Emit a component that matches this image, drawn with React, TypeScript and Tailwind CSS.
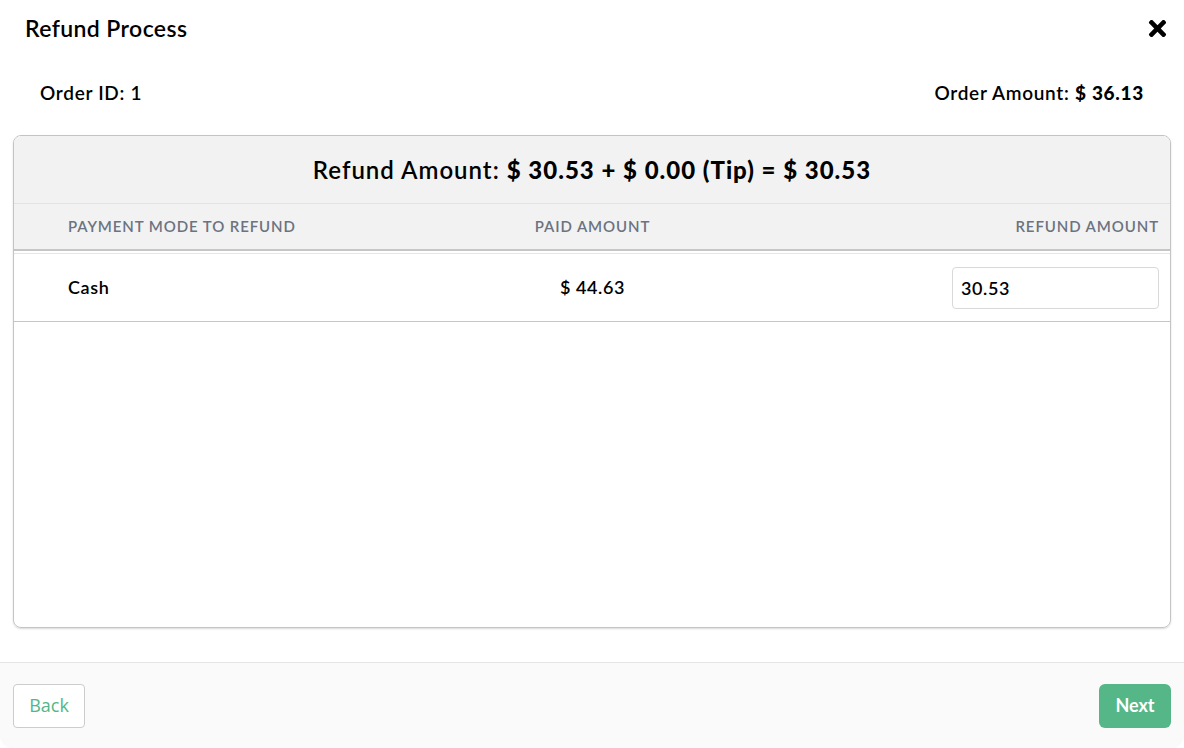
import { FaTimes } from "react-icons/fa";

export default function App() {
  return (
    <div
      className="w-[1184px] h-[748px] bg-white flex flex-col text-black"
      style={{ fontFamily: "Lato, 'Noto Sans', sans-serif" }}
    >
      <div className="flex items-center justify-between pl-[25px] pr-[14px] h-[56px]">
        <h1 className="text-[23px] font-semibold tracking-[0.4px]">Refund Process</h1>
        <button className="text-[25px] text-black">
          <FaTimes />
        </button>
      </div>

      <div className="flex justify-between px-[40px] h-[74px] items-center text-[19px] font-semibold tracking-[0.7px]">
        <span>Order ID: 1</span>
        <span>
          Order Amount: <span className="font-black">$ 36.13</span>
        </span>
      </div>

      <div className="mx-[13px] mt-[5px] h-[493px] border border-[#c4c4c4] rounded-lg shadow-[0_1px_2px_rgba(0,0,0,0.15)] overflow-hidden flex flex-col">
        <div className="bg-[#f2f2f2]">
          <div className="h-[68px] flex items-center justify-center text-[24px] font-semibold tracking-[1px] border-b border-[#e2e2e2]">
            Refund Amount:&nbsp;
            <span className="font-black">$ 30.53 + $ 0.00 (Tip) = $ 30.53</span>
          </div>
          <div className="grid grid-cols-3 h-[47px] items-center pl-[54px] pr-[11px] text-[15px] font-semibold tracking-[0.9px] text-[#6b7280] uppercase border-b-2 border-[#c6c6c6]">
            <span>Payment Mode to Refund</span>
            <span className="text-center pr-[42px]">Paid Amount</span>
            <span className="text-right">Refund Amount</span>
          </div>
        </div>
        <div className="mt-[2px] grid grid-cols-3 h-[69px] items-center pl-[54px] pr-[11px] text-[18px] font-semibold tracking-[0.6px] border-t border-[#e5e5e5] border-b border-b-[#c6c6c6]">
          <span>Cash</span>
          <span className="text-center pr-[42px]">$ 44.63</span>
          <div className="flex justify-end">
            <input
              defaultValue="30.53"
              className="w-[207px] h-[42px] border border-[#d9d9d9] rounded-[4px] px-[8px] text-[18px] font-semibold tracking-[0.6px] outline-none"
            />
          </div>
        </div>
      </div>

      <div className="mt-[34px] flex-1 bg-[#fafafa] border-t border-[#e5e5e5] rounded-b-[12px] flex items-center justify-between px-[13px]">
        <button
          className="w-[72px] h-[44px] bg-white border border-[#cccccc] rounded-[4px] text-[18px] text-[#52b788]"
          style={{ fontFamily: "'Open Sans', sans-serif" }}
        >
          Back
        </button>
        <button className="w-[72px] h-[44px] bg-[#55b787] rounded-[6px] text-[18px] font-bold text-white">
          Next
        </button>
      </div>
    </div>
  );
}
